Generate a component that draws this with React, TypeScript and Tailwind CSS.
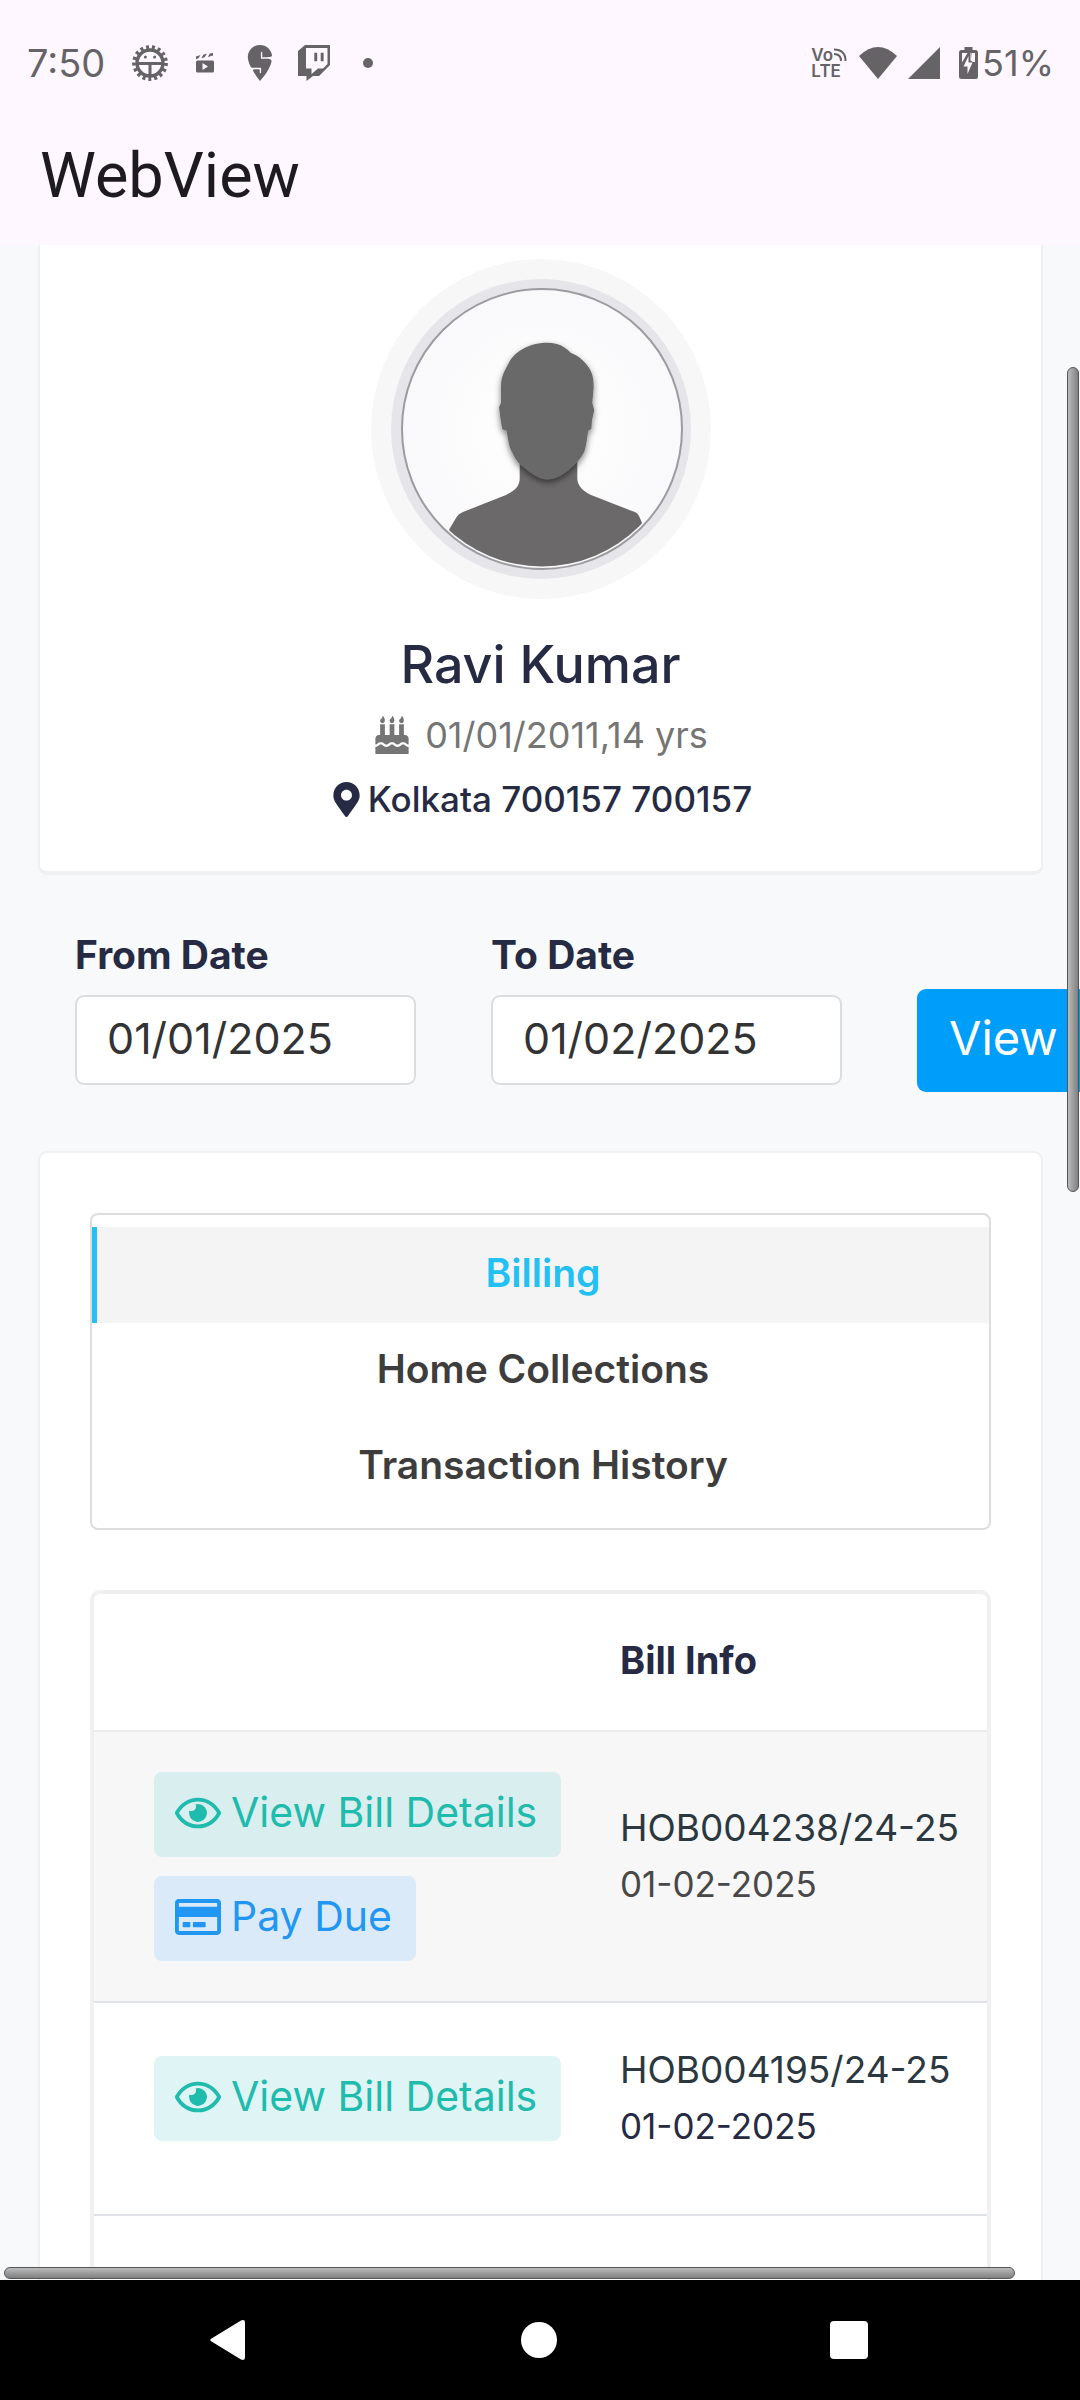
import type { ReactNode } from "react";
import { FaBirthdayCake, FaMapMarkerAlt, FaRegCreditCard, FaRegEye } from "react-icons/fa";
import { SiSwiggy } from "react-icons/si";

function GearFaceIcon() {
  return (
    <svg viewBox="-18 -18 36 36" className="size-9" fill="none" stroke="currentColor" aria-hidden="true">
      <circle r="13" strokeWidth="3.4" />
      <circle r="16" strokeWidth="3.8" strokeDasharray="3 2.913" />
      <path d="M-13 0.5H13M0 0.5V14" strokeWidth="3" />
      <circle cx="-4.6" cy="-6" r="1.5" fill="currentColor" stroke="none" />
      <circle cx="4.6" cy="-6" r="1.5" fill="currentColor" stroke="none" />
    </svg>
  );
}

function ClapperIcon() {
  return (
    <svg viewBox="0 0 18 20" className="h-5 w-[18px]" fill="currentColor" aria-hidden="true">
      <path d="M0 3.5L4.5 2L2.5 5.2L0 6.2zM7.5 1.6L11 .8L8.4 4.4L5.4 5zM13.8 .4L17 0V2.6L11.8 4zM1.5 7.5H16.5Q18 7.5 18 9V18Q18 19.5 16.5 19.5H1.5Q0 19.5 0 18V9Q0 7.5 1.5 7.5zM6.5 10V17L12 13.5z" fillRule="evenodd" />
    </svg>
  );
}

function TwitchIcon() {
  return (
    <svg viewBox="0 0 32 36" className="h-9 w-8" fill="currentColor" aria-hidden="true">
      <path
        fillRule="evenodd"
        d="M7 0H32V20L21 31H15L8.5 36V31H0V6zM8 3V23.5H13.5V29L20 23.5H25L29.5 19V3zM16.3 7.7H19.2V16.3H16.3zM22.7 7.7H25.6V16.3H22.7z"
      />
    </svg>
  );
}

function VolteIcon() {
  return (
    <div className="flex flex-col text-[17px] leading-4 font-semibold">
      <div className="flex items-center">
        <span>Vo</span>
        <svg viewBox="0 0 14 14" className="size-3.5" fill="none" stroke="currentColor" strokeWidth="2" aria-hidden="true">
          <path d="M1 1.5Q12.500 1.500 12.500 13M1 6Q8 6 8 13" />
        </svg>
      </div>
      <span>LTE</span>
    </div>
  );
}

function BatteryIcon() {
  return (
    <svg viewBox="0 0 19 32" className="h-8 w-[19px]" aria-hidden="true">
      <path fill="currentColor" d="M5.500 0H13.500V3H16.500Q19 3 19 5.500V29.500Q19 32 16.500 32H2.500Q0 32 0 29.500V5.500Q0 3 2.500 3H5.500z" />
      <path fill="#fef7ff" d="M3 6H8.500L3 15.500zM10 6H11.500V13.500L14 15H16V6H13V12L12.500 6zM9.500 9V15.500H13.500L8.500 27V19.500H4.500z" />
    </svg>
  );
}

function StatusBar() {
  return (
    <div className="flex h-[126px] items-center justify-between pr-[26px] pl-[27px] text-[#666366]">
      <div className="flex items-center">
        <span className="text-[38px] leading-10">7:50</span>
        <div className="ml-[27px] flex items-center">
          <GearFaceIcon />
          <span className="ml-7">
            <ClapperIcon />
          </span>
          <SiSwiggy className="ml-7 size-9" aria-hidden="true" />
          <span className="ml-5">
            <TwitchIcon />
          </span>
          <span className="ml-[33px] size-2.5 rounded-full bg-current" />
        </div>
      </div>
      <div className="flex items-center">
        <VolteIcon />
        <svg viewBox="0 0 38 32" className="ml-3 h-8 w-[38px]" fill="currentColor" aria-hidden="true">
          <path d="M0 9Q19 -9 38 9L19 32z" />
        </svg>
        <svg viewBox="0 0 32 32" className="ml-[11px] size-8" fill="currentColor" aria-hidden="true">
          <path d="M32 0V32H0z" />
        </svg>
        <span className="ml-[19px]">
          <BatteryIcon />
        </span>
        <span className="ml-1 text-[36px] leading-10">51%</span>
      </div>
    </div>
  );
}

function Avatar() {
  return (
    <svg viewBox="0 0 340 340" className="size-[340px]" role="img" aria-label="Profile photo">
      <defs>
        <clipPath id="portrait">
          <circle cx="171" cy="170" r="137.500" />
        </clipPath>
        <radialGradient id="backdrop">
          <stop offset="0" stopColor="#ffffff" />
          <stop offset="1" stopColor="#f9f9fb" />
        </radialGradient>
        <filter id="chin" x="-20%" y="-20%" width="140%" height="140%">
          <feDropShadow dx="0" dy="3" stdDeviation="3" floodColor="#000000" floodOpacity="0.5" />
        </filter>
      </defs>
      <circle cx="170" cy="170" r="170" fill="#f7f7f7" />
      <circle cx="170" cy="170" r="150" fill="#e6e6ea" />
      <circle cx="171" cy="170" r="140" fill="url(#backdrop)" stroke="#9c9ba1" strokeWidth="2" />
      <g clipPath="url(#portrait)" fill="#6b696a">
        <path d="M148.700 200V219C148.700 228 143 232 135 236L92 253Q87 255 85 259L78.300 270.300L70 310H280L272.300 266.700L268 257Q266 253 261 252L220 236C212 232 206.300 227 206.300 219V200z" />
        <path
          filter="url(#chin)"
          d="M176.700 83.700C156 83.700 142 94 136.700 106C132 114 130 120 130 127.700V144L128 148L129.500 160L131.300 170.300L135.700 171.700C137 181 138 188 141.700 194.300C145 202 149 206 155 210C163 217 170 220.300 177.300 220.300C187 220 196 213 203.300 206C208 201 211 197 213.300 192.700C216 184 216 178 217.300 171.700L220.300 170L221 161L223.300 151L221.300 144L222.700 128C222.500 121 222 116 219.300 111C215 103 208 97 200 94C193 87 187 83.700 176.700 83.700z"
        />
      </g>
    </svg>
  );
}

function ProfileCard() {
  return (
    <section className="mr-[37px] ml-[38px] flex flex-col items-center rounded-b-[9px] border-x-2 border-b-4 border-[#f0f0f0] bg-white pt-[14px] pb-[52px]">
      <Avatar />
      <h2 className="mt-9 text-[52px] leading-[60px] font-medium">Ravi Kumar</h2>
      <p className="mt-5 flex items-center text-[36px] leading-10 text-[#757575]">
        <FaBirthdayCake className="mr-3.5 size-[38px]" aria-hidden="true" />
        01/01/2011,14 yrs
      </p>
      <p className="mt-6 flex items-center text-[35px] leading-10 font-medium">
        <FaMapMarkerAlt className="mr-1 size-[35px]" aria-hidden="true" />
        Kolkata 700157 700157
      </p>
    </section>
  );
}

function DateField({ id, label, value, className }: { id: string; label: string; value: string; className: string }) {
  return (
    <div className={"flex shrink-0 flex-col gap-5 pb-[7px] " + className}>
      <label htmlFor={id} className="text-[39px] leading-10 font-bold">
        {label}
      </label>
      <input
        id={id}
        type="text"
        defaultValue={value}
        className="h-[90px] w-full rounded-[9px] border-2 border-[#dddddd] bg-white pr-4 pb-1 pl-[30px] text-[43px] text-[#333333]"
      />
    </div>
  );
}

function DateFilter() {
  return (
    <form className="mt-[60px] flex items-end gap-[75px] pl-[75px]">
      <DateField id="from-date" label="From Date" value="01/01/2025" className="w-[341px]" />
      <DateField id="to-date" label="To Date" value="01/02/2025" className="w-[351px]" />
      <button type="button" className="h-[103px] shrink-0 rounded-[9px] bg-[#009efb] px-8 pb-1 text-[47px] text-white">
        View
      </button>
    </form>
  );
}

const tabs = ["Billing", "Home Collections", "Transaction History"];

function Tabs() {
  return (
    <nav className="flex flex-col rounded-lg border-2 border-[#dddddd] pt-3 pb-[13px]">
      {tabs.map((tab, i) => (
        <button
          key={tab}
          type="button"
          aria-current={i === 0}
          className={
            "h-24 border-l-[5px] pb-1 text-[39px] font-semibold " +
            (i === 0 ? "border-[#22c0f3] bg-[#f4f4f4] text-[#22c0f3]" : "border-transparent text-[#3d3d3d]")
          }
        >
          {tab}
        </button>
      ))}
    </nav>
  );
}

function ActionLink({ icon, tone, children }: { icon: ReactNode; tone: string; children: ReactNode }) {
  return (
    <a href="#" className={"flex h-[85px] items-center gap-2.5 rounded-lg pr-6 pb-1 pl-[21px] text-[41px] " + tone}>
      {icon}
      {children}
    </a>
  );
}

const viewIcon = <FaRegEye className="size-[46px]" aria-hidden="true" />;
const cardIcon = <FaRegCreditCard className="size-[46px]" aria-hidden="true" />;

function BillInfo({ number, dateTone }: { number: string; dateTone: string }) {
  return (
    <td className="border-b-2 border-[#dee2e6] pb-[22px] align-middle">
      <p className="text-[37px] leading-[56px] text-[#2c3840]">{number}</p>
      <p className={"text-[35px] leading-[56px] " + dateTone}>01-02-2025</p>
    </td>
  );
}

function BillTable() {
  return (
    <div className="mt-[60px] overflow-hidden rounded-t-[10px] border-4 border-b-0 border-[#f0f0f0]">
      <table className="w-full border-separate border-spacing-0 text-left">
        <thead>
          <tr className="h-[138px]">
            <th aria-label="Actions" className="w-[526px] border-b-2 border-[#ebebeb]" />
            <th className="border-b-2 border-[#ebebeb] pb-1 text-[38px] font-bold">Bill Info</th>
          </tr>
        </thead>
        <tbody>
          <tr className="h-[271px] bg-[#f7f7f7]">
            <td className="border-b-2 border-[#dee2e6] pl-[60px] align-middle">
              <div className="flex flex-col items-start gap-[19px]">
                <ActionLink icon={viewIcon} tone="bg-[#d9eeee] text-[#1fbbad]">
                  View Bill Details
                </ActionLink>
                <ActionLink icon={cardIcon} tone="bg-[#dbeaf8] text-[#2196f3]">
                  Pay Due
                </ActionLink>
              </div>
            </td>
            <BillInfo number="HOB004238/24-25" dateTone="text-[#484848]" />
          </tr>
          <tr className="h-[213px]">
            <td className="border-b-2 border-[#dee2e6] pb-5 pl-[60px] align-middle">
              <div className="flex items-start">
                <ActionLink icon={viewIcon} tone="bg-[#dff5f5] text-[#1fbbad]">
                  View Bill Details
                </ActionLink>
              </div>
            </td>
            <BillInfo number="HOB004195/24-25" dateTone="text-[#262a42]" />
          </tr>
          <tr className="h-[213px]">
            <td />
            <td />
          </tr>
        </tbody>
      </table>
    </div>
  );
}

function NavigationBar() {
  return (
    <nav className="flex h-[120px] shrink-0 items-center justify-around bg-black pr-[76px] pl-[71px] text-white">
      <button type="button" aria-label="Back">
        <svg viewBox="-2 0 40 42" className="h-[42px] w-10" fill="currentColor" aria-hidden="true">
          <path d="M1.500 19.500L31 1.500Q35 0 35 3.500V38.500Q35 42 31 40.500L1.500 22.500Q-1 21 1.500 19.500z" />
        </svg>
      </button>
      <button type="button" aria-label="Home" className="size-9 rounded-full bg-white" />
      <button type="button" aria-label="Recent apps" className="size-[38px] rounded-[4px] bg-white" />
    </nav>
  );
}

export default function App() {
  return (
    <div className="flex h-screen flex-col overflow-hidden bg-[#f8f9fb] font-['Inter',sans-serif] text-[#262a42]">
      <header className="shrink-0 bg-[#fef7ff] pb-[19px]">
        <StatusBar />
        <h1 className="flex h-[100px] items-center pl-10 font-['Roboto',sans-serif] text-[63px] text-[#1d1b20]">WebView</h1>
      </header>
      <main className="relative min-h-0 flex-1 overflow-hidden">
        <ProfileCard />
        <DateFilter />
        <section className="mt-[59px] mr-[37px] ml-[38px] rounded-t-[9px] border-2 border-b-0 border-[#f0f0f0] bg-white px-[50px] pt-[60px]">
          <Tabs />
          <BillTable />
        </section>
        <div className="absolute top-[122px] right-px h-[825px] w-3 rounded-full border border-[#555555] bg-linear-to-r from-[#bcbcbc] to-[#808080]" />
        <div className="absolute right-[65px] bottom-px left-1 h-3 rounded-full border border-[#555555] bg-linear-to-b from-[#bcbcbc] to-[#808080]" />
      </main>
      <NavigationBar />
    </div>
  );
}
